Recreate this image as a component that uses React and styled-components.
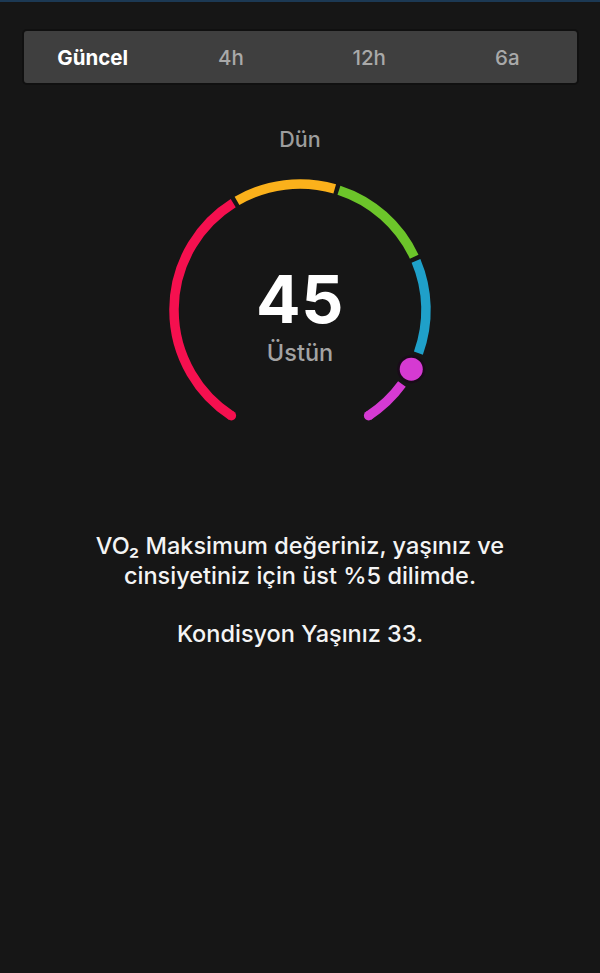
import React from 'react';
import styled, { createGlobalStyle } from 'styled-components';

const GlobalStyle = createGlobalStyle`
  html, body {
    margin: 0;
    padding: 0;
    background: #161616;
  }
  body {
    font-family: Inter, "Noto Sans", "Liberation Sans", sans-serif;
    -webkit-font-smoothing: antialiased;
  }
`;

const Page = styled.div`
  width: 600px;
  min-height: 973px;
  box-sizing: border-box;
  border-top: 2px solid #1c3954;
  background: #161616;
  display: flex;
  flex-direction: column;
  align-items: center;
`;

const Tabs = styled.div`
  margin-top: 29px;
  width: 553px;
  height: 52px;
  display: grid;
  grid-template-columns: repeat(4, 1fr);
  align-items: center;
  background: #3f3f3f;
  border-radius: 3px;
  box-shadow: 0 0 0 2px #101010;
`;

const Tab = styled.div`
  text-align: center;
  font-size: 20.5px;
  font-weight: ${(p) => (p.active ? 700 : 500)};
  color: ${(p) => (p.active ? '#ffffff' : '#a9a9a9')};
`;

const Caption = styled.div`
  margin-top: 44px;
  font-size: 21.5px;
  line-height: 24px;
  font-weight: 500;
  color: #9d9d9d;
`;

const GaugeWrap = styled.div`
  position: relative;
  margin-top: 19px;
  width: 280px;
  height: 262px;
`;

const GaugeCenter = styled.div`
  position: absolute;
  left: 0;
  right: 0;
  top: 96px;
  display: flex;
  flex-direction: column;
  align-items: center;
`;

const Value = styled.div`
  font-size: 66px;
  line-height: 66px;
  font-weight: 700;
  color: #ffffff;
  letter-spacing: 0.5px;
`;

const Level = styled.div`
  margin-top: 7px;
  font-size: 23.5px;
  line-height: 28px;
  font-weight: 500;
  color: #a3a3a3;
`;

const Message = styled.div`
  margin-top: 99px;
  width: 500px;
  text-align: center;
  color: #f4f4f4;
  font-size: 23.5px;
  line-height: 30px;
  font-weight: 500;
`;

const Para = styled.p`
  margin: 0 0 28px;
`;

const CX = 140;
const CY = 140;
const R = 126;

const point = (deg) => {
  const a = (deg * Math.PI) / 180;
  return [CX + R * Math.sin(a), CY - R * Math.cos(a)];
};

const arc = (from, to) => {
  const [x1, y1] = point(from);
  const [x2, y2] = point(to);
  const large = to - from > 180 ? 1 : 0;
  return `M ${x1.toFixed(2)} ${y1.toFixed(2)} A ${R} ${R} 0 ${large} 1 ${x2.toFixed(2)} ${y2.toFixed(2)}`;
};

const segments = [
  { from: -147, to: -32, color: '#f5104f', cap: 'start' },
  { from: -30, to: 16, color: '#fbb11b' },
  { from: 18, to: 65, color: '#6cc52a' },
  { from: 67, to: 110, color: '#1fa0c9' },
  { from: 126, to: 147, color: '#d53ad2', cap: 'end' },
];

const Gauge = () => {
  const [dx, dy] = point(118);
  return (
    <svg width="280" height="262" viewBox="0 0 280 262">
      {segments.map((s) => (
        <path
          key={s.color}
          d={arc(s.from, s.to)}
          fill="none"
          stroke={s.color}
          strokeWidth="9.5"
          strokeLinecap="butt"
        />
      ))}
      {segments
        .filter((s) => s.cap)
        .map((s) => {
          const [x, y] = point(s.cap === 'start' ? s.from : s.to);
          return <circle key={s.cap} cx={x} cy={y} r="4.75" fill={s.color} />;
        })}
      <circle cx={dx} cy={dy} r="14" fill="#1a0a1a" />
      <circle cx={dx} cy={dy} r="11.5" fill="#d53ad2" />
    </svg>
  );
};

const App = () => {
  const tabs = ['Güncel', '4h', '12h', '6a'];
  return (
    <>
      <GlobalStyle />
      <Page>
        <Tabs>
          {tabs.map((t, i) => (
            <Tab key={t} active={i === 0}>
              {t}
            </Tab>
          ))}
        </Tabs>
        <Caption>Dün</Caption>
        <GaugeWrap>
          <Gauge />
          <GaugeCenter>
            <Value>45</Value>
            <Level>Üstün</Level>
          </GaugeCenter>
        </GaugeWrap>
        <Message>
          <Para>VO₂ Maksimum değeriniz, yaşınız ve cinsiyetiniz için üst %5 dilimde.</Para>
          <Para>Kondisyon Yaşınız 33.</Para>
        </Message>
      </Page>
    </>
  );
};

export default App;
